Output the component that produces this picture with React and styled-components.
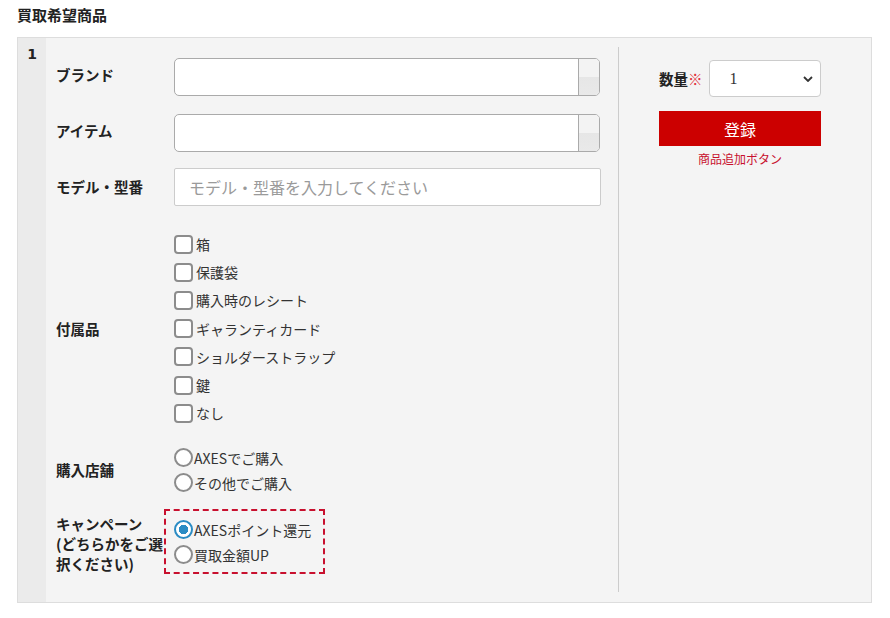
import { useState } from 'react';
import styled, { createGlobalStyle } from 'styled-components';

const GlobalStyle = createGlobalStyle`
  body {
    margin: 0;
    background: #fff;
    font-family: "Noto Sans CJK JP", "Noto Sans", sans-serif;
    color: #222;
  }
`;

const accessories = ['箱', '保護袋', '購入時のレシート', 'ギャランティカード', 'ショルダーストラップ', '鍵', 'なし'];
const stores = ['AXESでご購入', 'その他でご購入'];
const campaigns = ['AXESポイント還元', '買取金額UP'];

const App = () => {
    const [checked, setChecked] = useState({});
    const [store, setStore] = useState(null);
    const [campaign, setCampaign] = useState(0);
    const [qty, setQty] = useState('1');

    const toggle = (name) => setChecked({ ...checked, [name]: !checked[name] });

    return (
        <Page>
            <GlobalStyle />
            <Title>買取希望商品</Title>
            <Box>
                <NumberCol>1</NumberCol>
                <Main>
                    <FormCol>
                        <Row>
                            <Label $shift>ブランド</Label>
                            <Combo>
                                <ComboInput type="text" />
                                <ComboButton />
                            </Combo>
                        </Row>
                        <Row $gap={18}>
                            <Label $shift>アイテム</Label>
                            <Combo>
                                <ComboInput type="text" />
                                <ComboButton />
                            </Combo>
                        </Row>
                        <Row $gap={16}>
                            <Label>モデル・型番</Label>
                            <TextInput type="text" placeholder="モデル・型番を入力してください" />
                        </Row>
                        <Row $gap={24}>
                            <Label>付属品</Label>
                            <OptionList>
                                {accessories.map((a) => (
                                    <CheckItem key={a} $h={28.2} onClick={() => toggle(a)}>
                                        <CheckBox $on={!!checked[a]} />
                                        {a}
                                    </CheckItem>
                                ))}
                            </OptionList>
                        </Row>
                        <Row $gap={18}>
                            <Label>購入店舗</Label>
                            <OptionList>
                                {stores.map((s, i) => (
                                    <CheckItem key={s} $h={25} onClick={() => setStore(i)}>
                                        <Radio $on={store === i} />
                                        {s}
                                    </CheckItem>
                                ))}
                            </OptionList>
                        </Row>
                        <Row $gap={14} $top>
                            <Label $top>
                                キャンペーン<br />(どちらかをご選<br />択ください)
                            </Label>
                            <CampaignBox>
                                {campaigns.map((c, i) => (
                                    <CheckItem key={c} $h={25} onClick={() => setCampaign(i)}>
                                        <Radio $on={campaign === i} />
                                        {c}
                                    </CheckItem>
                                ))}
                            </CampaignBox>
                        </Row>
                    </FormCol>
                    <SideCol>
                        <QtyRow>
                            <QtyLabel>数量<Req>※</Req></QtyLabel>
                            <SelectWrap>
                                <Select value={qty} onChange={(e) => setQty(e.target.value)}>
                                    {[1, 2, 3, 4, 5, 6, 7, 8, 9, 10].map((n) => (
                                        <option key={n} value={n}>{n}</option>
                                    ))}
                                </Select>
                                <Chevron viewBox="0 0 10 6">
                                    <path d="M1 1l4 4 4-4" fill="none" stroke="#333" strokeWidth="1.8" />
                                </Chevron>
                            </SelectWrap>
                        </QtyRow>
                        <SubmitButton>登録</SubmitButton>
                        <Caption>商品追加ボタン</Caption>
                    </SideCol>
                </Main>
            </Box>
        </Page>
    );
};

// スタイル
const Page = styled.div`
  padding: 5px 17px 0 17px;
`;
const Title = styled.div`
  font-size: 15px;
  line-height: 20px;
  font-weight: 700;
  color: #222;
`;
const Box = styled.div`
  margin-top: 12px;
  width: 853px;
  height: 564px;
  display: flex;
  border: 1px solid #ddd;
  background: #f4f4f4;
`;
const NumberCol = styled.div`
  width: 28px;
  flex: none;
  background: #ebebeb;
  text-align: center;
  font-size: 14px;
  font-weight: 700;
  font-family: "DejaVu Sans", sans-serif;
  padding-top: 8px;
  color: #222;
  box-sizing: border-box;
`;
const Main = styled.div`
  flex: 1;
  display: flex;
  padding: 9px 0 10px 0;
`;
const FormCol = styled.div`
  width: 573px;
  box-sizing: border-box;
  border-right: 1px solid #ccc;
  padding: 11px 0 0 10px;
`;
const Row = styled.div`
  display: grid;
  grid-template-columns: 118px 426px;
  align-items: ${(p) => (p.$top ? 'start' : 'center')};
  margin-top: ${(p) => p.$gap || 0}px;
`;
const Label = styled.div`
  font-size: 14.5px;
  font-weight: 700;
  line-height: 20px;
  color: #222;
  padding-top: ${(p) => (p.$top ? '5px' : '0')};
  margin-top: ${(p) => (p.$shift ? '-4px' : '0')};
  white-space: nowrap;
`;
const Combo = styled.div`
  height: 38px;
  display: flex;
  box-sizing: border-box;
  border: 1px solid #aaa;
  border-radius: 5px;
  background: #fff;
  overflow: hidden;
`;
const ComboInput = styled.input`
  flex: 1;
  border: none;
  outline: none;
  background: transparent;
  font-size: 14px;
`;
const ComboButton = styled.div`
  width: 20px;
  border-left: 1px solid #aaa;
  background: linear-gradient(#f3f3f3 0%, #f3f3f3 50%, #e6e6e6 50%, #e9e9e9 100%);
`;
const TextInput = styled.input`
  height: 38px;
  width: 427px;
  box-sizing: border-box;
  border: 1px solid #ccc;
  border-radius: 2px;
  padding: 0 14px;
  font-size: 16px;
  font-family: inherit;
  outline: none;
  &::placeholder {
    color: #9a9a9a;
  }
`;
const OptionList = styled.div`
  display: flex;
  flex-direction: column;
`;
const CheckItem = styled.label`
  display: flex;
  align-items: center;
  height: ${(p) => p.$h}px;
  font-size: 14px;
  color: #333;
  cursor: pointer;
`;
const CheckBox = styled.span`
  width: 19px;
  height: 19px;
  box-sizing: border-box;
  border: 2px solid #8c8c8c;
  border-radius: 4px;
  background: ${(p) => (p.$on ? '#2b8cc4' : '#fff')};
  margin-right: 3px;
  flex: none;
`;
const Radio = styled.span`
  width: 19px;
  height: 19px;
  box-sizing: border-box;
  border-radius: 50%;
  border: 2px solid ${(p) => (p.$on ? '#2b8cc4' : '#8c8c8c')};
  background: ${(p) => (p.$on ? 'radial-gradient(circle, #2b8cc4 0 4.5px, #fff 5px)' : '#fff')};
  margin-right: 1px;
  flex: none;
`;
/* 手前に重ねてラベルの「選」を隠す */
const CampaignBox = styled.div`
  position: relative;
  margin-left: -10px;
  width: 161px;
  height: 65px;
  box-sizing: border-box;
  border: 2px dashed #c8102e;
  padding: 6px 0 0 8px;
  display: flex;
  flex-direction: column;
  background: #f4f4f4;
`;
const SideCol = styled.div`
  flex: 1;
  padding: 13px 0 0 40px;
  display: flex;
  flex-direction: column;
  align-items: flex-start;
`;
const QtyRow = styled.div`
  display: flex;
  align-items: center;
  gap: 6px;
`;
const QtyLabel = styled.div`
  font-size: 14.5px;
  font-weight: 700;
  color: #222;
`;
const Req = styled.span`
  color: #e0303a;
  font-weight: 400;
`;
const SelectWrap = styled.div`
  position: relative;
  width: 112px;
  height: 37px;
`;
const Select = styled.select`
  appearance: none;
  width: 100%;
  height: 100%;
  box-sizing: border-box;
  border: 1px solid #ccc;
  border-radius: 4px;
  background: #fff;
  padding-left: 20px;
  font-size: 16px;
  font-family: "Liberation Serif", serif;
  color: #333;
  outline: none;
`;
const Chevron = styled.svg`
  position: absolute;
  right: 8px;
  top: 16px;
  width: 10px;
  height: 6px;
  pointer-events: none;
`;
const SubmitButton = styled.button`
  margin-top: 14px;
  width: 162px;
  height: 35px;
  border: none;
  background: #cc0000;
  color: #fff;
  font-size: 16px;
  font-family: inherit;
  cursor: pointer;
`;
const Caption = styled.div`
  width: 162px;
  text-align: center;
  margin-top: 4px;
  font-size: 12px;
  color: #c8102e;
`;

export default App;
